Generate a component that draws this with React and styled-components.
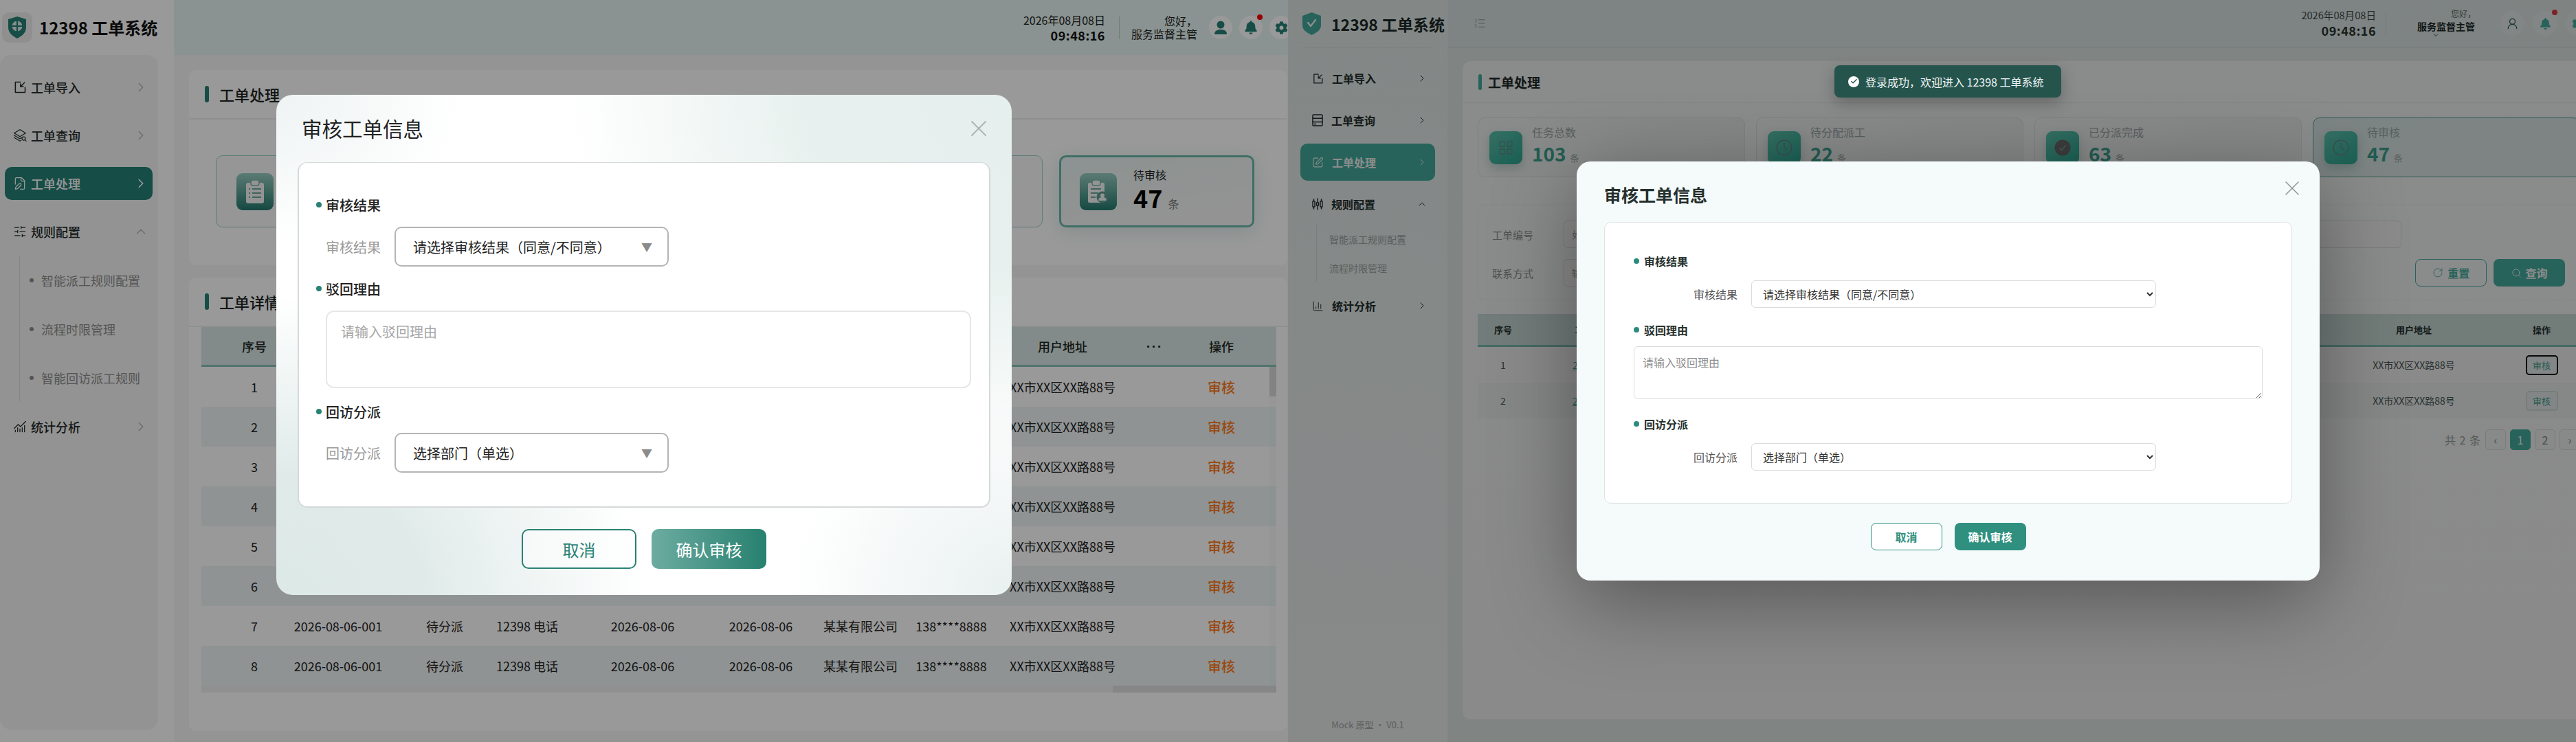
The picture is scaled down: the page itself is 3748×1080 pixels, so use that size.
import React from "react"
import styled, { createGlobalStyle } from "styled-components"
import {
  ChevronRight, ChevronUp, ChevronDown, X, FilePen, SlidersHorizontal, ChartNoAxesCombined,
  SquarePen, ChartColumn, ListCollapse, UserRound, RotateCw, Search, Clock, LayoutGrid, Check,
} from "lucide-react"
import { FaBell, FaCog } from "react-icons/fa"

const GlobalStyle = createGlobalStyle`
  html, body { margin: 0; padding: 0; background: #fff; }
  * { box-sizing: border-box; }
  body { font-family: "Noto Sans CJK SC", "Noto Sans", sans-serif; color: #1f2b29; }
`

const Screen = styled.div`
  width: 3748px;
  height: 1080px;
  display: grid;
  grid-template-columns: 1874px 1874px;
  overflow: hidden;
`

const Pane = styled.section`
  position: relative;
  height: 1080px;
  overflow: hidden;
`

const Backdrop = styled.div`
  position: absolute;
  inset: 0;
  background: rgba(0, 0, 0, ${p => p.$alpha});
`

/* ---------- left window ---------- */

const LeftApp = styled.div`
  display: flex;
  width: 1874px;
  height: 1080px;
  background: #f7f7f7;
`

const LeftSidebar = styled.aside`
  width: 253px;
  flex: none;
  display: flex;
  flex-direction: column;
  background: #fff;
`

const LeftBrand = styled.div`
  height: 80px;
  flex: none;
  display: flex;
  align-items: center;
  gap: 10px;
  padding-left: 3px;
`

const LogoTile = styled.div`
  width: 44px;
  height: 44px;
  display: flex;
  align-items: center;
  justify-content: center;
  border-radius: 10px;
  background: #eeeeee;
`

const LeftBrandName = styled.div`
  font-size: 24px;
  font-weight: 700;
  line-height: 1;
  white-space: nowrap;
  color: #111;
`

const LeftNav = styled.nav`
  width: 230px;
  height: 982px;
  display: flex;
  flex-direction: column;
  gap: 22px;
  padding: 23px 8px 0 7px;
  border-radius: 16px;
  background: #f5f5f5;
`

const LeftNavItem = styled.div`
  height: 48px;
  flex: none;
  display: flex;
  align-items: center;
  gap: 6px;
  padding: 0 6px 0 12px;
  border-radius: 10px;
  font-size: 18px;
  font-weight: 500;
  background: ${p => (p.$active ? "#268075" : "transparent")};
  color: ${p => (p.$active ? "#fff" : "#1f2b29")};
  & > span { flex: 1; }
  & > svg:last-child { color: ${p => (p.$active ? "#fff" : "#b4b4b4")}; }
`

const LeftSubList = styled.div`
  height: 212px;
  flex: none;
  display: flex;
  flex-direction: column;
  gap: 23px;
  margin: -11px 0 -9px 21px;
  padding-top: 12px;
  border-left: 1px solid #dddddd;
`

const LeftSubItem = styled.div`
  height: 48px;
  flex: none;
  display: flex;
  align-items: center;
  gap: 11px;
  padding-left: 14px;
  font-size: 18px;
  color: #8c8c8c;
  &::before {
    content: "";
    width: 6px;
    height: 6px;
    border-radius: 50%;
    background: #8c8c8c;
  }
`

const LeftMain = styled.main`
  flex: 1;
  min-width: 0;
  display: flex;
  flex-direction: column;
`

const LeftHeader = styled.header`
  height: 80px;
  flex: none;
  display: flex;
  align-items: center;
  justify-content: flex-end;
  margin-bottom: 22px;
  background: #e6f5f2;
`

const LeftClock = styled.div`
  text-align: right;
  font-size: 16px;
  line-height: 20px;
  color: #222;
  & > strong {
    display: block;
    margin-top: 2px;
    font-size: 18px;
    line-height: 20px;
    letter-spacing: 0.5px;
    font-weight: 700;
    color: #111;
  }
`

const LeftDivider = styled.div`
  width: 1px;
  height: 33px;
  margin: 0 17px 0 20px;
  background: #c0ccca;
`

const LeftUser = styled.div`
  text-align: right;
  font-size: 16px;
  line-height: 19px;
  color: #222;
`

const IconRow = styled.div`
  display: flex;
  gap: ${p => p.$gap}px;
  margin: ${p => p.$margin};
`

const RoundIcon = styled.div`
  position: relative;
  width: ${p => p.$size}px;
  height: ${p => p.$size}px;
  flex: none;
  display: flex;
  align-items: center;
  justify-content: center;
  border-radius: 50%;
  background: ${p => p.$bg};
  color: ${p => p.$color};
`

const RedDot = styled.i`
  position: absolute;
  top: -2px;
  right: 0;
  width: 8px;
  height: 8px;
  border-radius: 50%;
  background: ${p => p.$color};
`

const LeftPanel = styled.div`
  margin: 0 1px ${p => p.$gap}px 22px;
  height: ${p => p.$height}px;
  flex: none;
  border-radius: 10px;
  background: #fff;
`

const LeftPanelHead = styled.div`
  height: 72px;
  display: flex;
  align-items: center;
  gap: 15px;
  padding-left: 23px;
  border-bottom: 2px solid #eeeeee;
  font-size: 22px;
  font-weight: 500;
  color: #1c2624;
  &::before {
    content: "";
    width: 6px;
    height: 24px;
    border-radius: 3px;
    background: #268075;
  }
`

const LeftStats = styled.div`
  display: grid;
  grid-template-columns: repeat(3, 1fr) 284px;
  gap: 24px;
  padding: 52px 48px 0 39px;
`

const LeftStat = styled.div`
  height: 105px;
  display: flex;
  align-items: center;
  gap: 24px;
  padding-left: ${p => (p.$current ? 27 : 29)}px;
  border-radius: 10px;
  border: ${p => (p.$current ? "3px solid #69b8a9" : "1px solid #9fd0c6")};
  background: ${p => (p.$current ? "linear-gradient(170deg, #eaf5f3, #f8f6f6)" : "#fafafa")};
  box-shadow: ${p => (p.$current ? "0 6px 26px rgba(38, 128, 117, 0.16)" : "none")};
`

const LeftStatIcon = styled.div`
  width: 54px;
  height: 54px;
  flex: none;
  display: flex;
  align-items: center;
  justify-content: center;
  border-radius: 9px;
  background: linear-gradient(180deg, #98cdc1, #247a6f);
`

const LeftStatText = styled.div`
  padding-top: 3px;
`

const LeftStatLabel = styled.div`
  font-size: 16px;
  line-height: 22px;
  color: #222;
`

const LeftStatValue = styled.div`
  display: flex;
  align-items: baseline;
  gap: 8px;
  font-size: 36px;
  line-height: 44px;
  font-weight: 700;
  color: #000;
  & > small {
    font-size: 16px;
    font-weight: 400;
    color: #777;
  }
`

const LEFT_COLUMNS = "98px 202px 108px 132px 204px 140px 150px 114px 210px 58px 136px 12px"

const LeftTable = styled.div`
  position: relative;
  margin: 0 16px 0 18px;
`

const LeftRow = styled.div`
  display: grid;
  grid-template-columns: ${LEFT_COLUMNS};
  height: 58px;
  align-items: center;
  text-align: center;
  font-size: 18px;
  white-space: nowrap;
  color: #222;
  background: ${p => (p.$head ? "#d9e8e5" : p.$even ? "#eef6f6" : "#fff")};
  ${p => p.$head && "border-bottom: 3px solid #86c2b6; font-weight: 500; color: #1c2624;"}
  & > div:first-child { padding-left: 56px; }
`

const HeadDots = styled.div`
  font-family: "Noto Sans", sans-serif;
  letter-spacing: 3px;
  font-weight: 700;
`

const OrangeLink = styled.span`
  font-size: 20px;
  font-weight: 500;
  color: #ff7a1a;
`

const LeftScrollY = styled.div`
  position: absolute;
  top: 58px;
  right: 0;
  bottom: 10px;
  width: 10px;
  background: rgba(0, 0, 0, 0.015);
  &::before {
    content: "";
    display: block;
    height: 43px;
    background: rgba(0, 0, 0, 0.13);
  }
`

const LeftScrollX = styled.div`
  height: 10px;
  display: flex;
  justify-content: flex-end;
  background: #f1f1f1;
  &::before {
    content: "";
    width: 238px;
    background: #e0e0e0;
  }
`

const LeftModal = styled.div`
  position: absolute;
  left: 402px;
  top: 138px;
  width: 1070px;
  height: 728px;
  display: flex;
  flex-direction: column;
  padding: 0 31px;
  border-radius: 24px;
  background:
    radial-gradient(ellipse 60% 75% at 100% 0%, #e5efed 0%, #e7f0ee 45%, rgba(231, 240, 238, 0) 100%),
    radial-gradient(ellipse 50% 60% at 0% 100%, #dde9e7 0%, #e0ebe9 40%, rgba(224, 235, 233, 0) 100%),
    radial-gradient(ellipse 30% 40% at 100% 100%, #e9f0f0 0%, rgba(233, 240, 240, 0) 100%),
    radial-gradient(ellipse 25% 30% at 0% 0%, #eef3f3 0%, rgba(238, 243, 243, 0) 100%),
    #fff;
`

const LeftModalHead = styled.div`
  height: 98px;
  flex: none;
  display: flex;
  align-items: center;
  justify-content: space-between;
  padding: 0 0 0 6px;
`

const LeftModalTitle = styled.h2`
  margin: 0 0 2px;
  font-size: 29.5px;
  font-weight: 400;
  color: #222;
`

const CloseButton = styled.button`
  width: ${p => p.$size}px;
  height: ${p => p.$size}px;
  padding: 0;
  display: flex;
  align-items: center;
  justify-content: center;
  border: none;
  background: none;
  color: ${p => p.$color};
  margin: ${p => p.$margin};
`

const LeftFormCard = styled.div`
  height: 503px;
  flex: none;
  padding: 47px 27px 0 25px;
  border: 2px solid #d6d9d9;
  border-top-width: 1.5px;
  border-radius: 14px;
  background: #fff;
`

const LeftSection = styled.div`
  display: flex;
  align-items: center;
  gap: 6px;
  height: 28px;
  margin-top: ${p => p.$top}px;
  font-size: 20px;
  font-weight: 500;
  color: #222;
  &::before {
    content: "";
    width: 8px;
    height: 8px;
    border-radius: 50%;
    background: #2a8274;
  }
`

const LeftField = styled.div`
  display: flex;
  align-items: center;
  gap: 20px;
  margin: ${p => p.$top}px 0 0 14px;
  font-size: 20px;
  color: #999;
`

const LeftSelect = styled.div`
  width: 399px;
  height: 58px;
  display: flex;
  align-items: center;
  justify-content: space-between;
  padding: 0 22px 0 25px;
  border: 2px solid #b4b4b4;
  border-radius: 10px;
  background: #fff;
  font-size: 20px;
  color: #222;
  & > span:last-child { font-size: 16px; color: #8b8b8b; }
`

const LeftTextArea = styled.div`
  width: 939px;
  height: 113px;
  margin: 18px 0 0 14px;
  padding: 14px 20px;
  border: 2px solid #e7e7e7;
  border-radius: 12px;
  font-size: 20px;
  line-height: 30px;
  color: #a6a6a6;
`

const LeftFooter = styled.div`
  display: flex;
  justify-content: center;
  gap: 22px;
  margin-top: 31px;
`

const LeftButton = styled.button`
  width: 167px;
  height: 58px;
  border-radius: 10px;
  font-family: inherit;
  font-size: 24px;
  border: ${p => (p.$primary ? "none" : "2px solid #2a8274")};
  background: ${p => (p.$primary ? "linear-gradient(90deg, #6caca1, #27806f)" : "rgba(255, 255, 255, 0.45)")};
  color: ${p => (p.$primary ? "#fff" : "#2a8274")};
`

/* ---------- right window ---------- */

const RightApp = styled.div`
  position: relative;
  display: flex;
  width: 1920px;
  height: 1080px;
  background: #eaf0ef;
`

const RightSidebar = styled.aside`
  width: 233px;
  flex: none;
  display: flex;
  flex-direction: column;
  background: linear-gradient(180deg, #eef8f6 0%, #f8fafa 100%);
  border-right: 1px solid #edf2f1;
`

const RightBrand = styled.div`
  height: 70px;
  flex: none;
  display: flex;
  align-items: center;
  gap: 15px;
  margin: 0 21px;
  border-bottom: 1px solid #e2eae8;
  font-size: 23px;
  font-weight: 700;
  white-space: nowrap;
  color: #1c2b28;
  & > svg { flex: none; }
`

const RightNav = styled.nav`
  display: flex;
  flex-direction: column;
  gap: 7px;
  padding: 17px 18px 0;
`

const RightNavItem = styled.div`
  height: 54px;
  flex: none;
  display: flex;
  align-items: center;
  gap: 12px;
  padding: 0 11px 0 17px;
  border-radius: 10px;
  font-size: 16px;
  font-weight: 700;
  background: ${p => (p.$active ? "#47b5a4" : "transparent")};
  color: ${p => (p.$active ? "#fff" : "#24312e")};
  & > span { flex: 1; }
`

const RightSubList = styled.div`
  height: 83px;
  flex: none;
  margin: -4px 0 1px 23px;
  padding-left: 18px;
  border-left: 1px solid #dce6e4;
`

const RightSubItem = styled.div`
  height: 42px;
  display: flex;
  align-items: center;
  font-size: 14px;
  color: #a3aeac;
`

const VersionNote = styled.div`
  margin-top: auto;
  padding-bottom: 16px;
  text-align: center;
  font-size: 13px;
  line-height: 18px;
  color: #a3afad;
`

const RightMain = styled.main`
  flex: 1;
  min-width: 0;
  display: flex;
  flex-direction: column;
`

const RightHeader = styled.header`
  height: 70px;
  flex: none;
  display: flex;
  align-items: center;
  padding: 0 25px 0 37px;
  margin-bottom: 19px;
  border-bottom: 2px solid #dbe8e5;
  background: linear-gradient(90deg, #e3f1ee, #e7f1ef);
  color: #8ba09c;
`

const RightClock = styled.div`
  margin-left: auto;
  text-align: right;
  font-size: 14.6px;
  line-height: 20px;
  color: #404b49;
  & > strong {
    display: block;
    margin-top: 0;
    font-size: 18px;
    line-height: 24px;
    letter-spacing: 0.5px;
    font-weight: 700;
    color: #2a3533;
  }
`

const RightDivider = styled.div`
  width: 1px;
  height: 36px;
  margin: 0 45px 0 14px;
  background: #d5e0de;
`

const RightUser = styled.div`
  width: 85px;
  margin-right: 35px;
  font-size: 14px;
  font-weight: 700;
  line-height: 20px;
  color: #222d2b;
  white-space: nowrap;
  & > span {
    display: block;
    text-align: right;
    font-size: 12px;
    font-weight: 400;
    line-height: 16px;
    color: #5d6a68;
  }
  & > svg {
    display: block;
    margin: -3px 0 0 21px;
    color: #3f4c4a;
  }
`

const RightPanel = styled.div`
  margin: 0 18px 33px 21px;
  flex: 1;
  border-radius: 12px;
  background: linear-gradient(180deg, #fbfdfd, #fbfcfc);
`

const RightPanelHead = styled.div`
  height: 61px;
  display: flex;
  align-items: center;
  gap: 9px;
  padding-left: 23px;
  border-bottom: 1px solid #eef3f2;
  font-size: 19px;
  font-weight: 700;
  color: #1f2b29;
  &::before {
    content: "";
    width: 5px;
    height: 23px;
    border-radius: 3px;
    background: #47b5a4;
  }
`

const RightBody = styled.div`
  padding: 21px 22px 0;
`

const RightStats = styled.div`
  display: grid;
  grid-template-columns: repeat(4, 1fr);
  gap: 16px;
`

const RightStat = styled.div`
  height: 87px;
  display: flex;
  align-items: center;
  gap: 14px;
  padding-left: 16px;
  border-radius: 10px;
  border: 1px solid ${p => (p.$current ? "#5aa69a" : "#e4eaea")};
  background: ${p => (p.$current ? "linear-gradient(135deg, #e2f0ee, #e4f1ef)" : "linear-gradient(135deg, #fbfdfd, #f1f5f4)")};
`

const RightStatIcon = styled.div`
  width: 48px;
  height: 48px;
  flex: none;
  display: flex;
  align-items: center;
  justify-content: center;
  border-radius: 9px;
  background: linear-gradient(145deg, #62cbb6, #2faf98);
  box-shadow: 0 6px 14px rgba(40, 120, 105, 0.25);
  color: #6b8f89;
`

const RightStatLabel = styled.div`
  font-size: 16px;
  line-height: 22px;
  color: #a0aeac;
`

const RightStatValue = styled.div`
  display: flex;
  align-items: baseline;
  gap: 6px;
  margin-top: 2px;
  font-size: 28px;
  line-height: 36px;
  font-weight: 700;
  color: #3fa896;
  & > small {
    font-size: 13px;
    font-weight: 400;
    color: #a5afad;
  }
`

const RightFilter = styled.div`
  height: 139px;
  margin-top: 40px;
  display: flex;
  flex-direction: column;
  gap: 16px;
  padding: 22px 21px 0 20px;
  border: 1px solid #f1f4f3;
  border-radius: 10px;
  background: #fcfdfd;
`

const RightFilterRow = styled.div`
  display: flex;
  align-items: center;
`

const RightFilterLabel = styled.label`
  width: 104px;
  flex: none;
  font-size: 15px;
  color: #8b9795;
`

const RightFilterInput = styled.input`
  width: ${p => p.$width}px;
  height: 40px;
  padding: 0 11px;
  border: 1px solid #dfe5e4;
  border-radius: 6px;
  background: #fdfefe;
  font-family: inherit;
  font-size: 14px;
  &::placeholder { color: #99a5a3; }
`

const RightFilterButton = styled.button`
  width: 104px;
  height: 40px;
  display: flex;
  align-items: center;
  justify-content: center;
  gap: 6px;
  margin-left: ${p => p.$left}px;
  border-radius: 8px;
  font-family: inherit;
  font-size: 16px;
  font-weight: 700;
  border: ${p => (p.$primary ? "none" : "1px solid #47b5a4")};
  background: ${p => (p.$primary ? "#47b5a4" : "transparent")};
  color: ${p => (p.$primary ? "#fff" : "#47b5a4")};
`

const RightTable = styled.div`
  margin-top: 20px;
`

const RIGHT_COLUMNS = "74px 228px repeat(6, 1fr) 260px 112px"

const RightRow = styled.div`
  display: grid;
  grid-template-columns: ${RIGHT_COLUMNS};
  height: ${p => (p.$head ? 48 : 52)}px;
  align-items: center;
  text-align: center;
  white-space: nowrap;
  font-size: ${p => (p.$head ? 13 : 14)}px;
  font-weight: ${p => (p.$head ? 700 : 400)};
  color: #4d5a58;
  background: ${p => (p.$head ? "linear-gradient(90deg, #cfe2df, #cfe3df)" : p.$even ? "#f2f7f6" : "#fbfcfc")};
  ${p => p.$head && "border-bottom: 3px solid #7fc1b5; color: #26322f;"}
`

const RightTicketLink = styled.span`
  color: #3fa896;
  text-decoration: underline;
`

const RightRowButton = styled.button`
  width: 47px;
  height: 29px;
  padding: 0;
  border-radius: 5px;
  font-family: inherit;
  font-size: 13px;
  color: #47a596;
  background: #eef5f4;
  border: ${p => (p.$focused ? "2px solid #111" : "2px solid #d5e3e0")};
`

const RightPager = styled.div`
  display: flex;
  align-items: center;
  justify-content: flex-end;
  gap: 6px;
  margin-top: 16px;
  font-size: 16px;
  letter-spacing: 1px;
  color: #9aa5a3;
`

const RightPageButton = styled.button`
  width: 30px;
  height: 30px;
  padding: 0;
  border-radius: 5px;
  font-family: inherit;
  font-size: 16px;
  border: 1px solid ${p => (p.$active ? "#47b5a4" : "#dbe3e1")};
  background: ${p => (p.$active ? "#47b5a4" : "#f8fafa")};
  color: ${p => (p.$active ? "#fff" : "#7f8c8a")};
`

const Toast = styled.div`
  position: absolute;
  left: 795px;
  top: 95px;
  z-index: 3;
  width: 330px;
  height: 47px;
  display: flex;
  align-items: center;
  gap: 9px;
  padding-left: 20px;
  border-radius: 8px;
  background: #25544d;
  box-shadow: 0 8px 22px rgba(0, 0, 0, 0.25);
  font-size: 16px;
  white-space: nowrap;
  color: #f1f6f5;
`

const ToastMark = styled.span`
  width: 16px;
  height: 16px;
  flex: none;
  display: flex;
  align-items: center;
  justify-content: center;
  border-radius: 50%;
  background: #fff;
  color: #25544d;
`

const RightModal = styled.div`
  position: absolute;
  left: 420px;
  top: 235px;
  z-index: 2;
  width: 1081px;
  height: 610px;
  display: flex;
  flex-direction: column;
  padding: 0 40px;
  border-radius: 20px;
  background: #f5fafa;
  box-shadow: 0 30px 120px rgba(0, 0, 0, 0.38);
`

const RightModalHead = styled.div`
  height: 88px;
  flex: none;
  display: flex;
  align-items: center;
  justify-content: space-between;
`

const RightModalTitle = styled.h2`
  margin: 8px 0 0;
  font-size: 25px;
  font-weight: 700;
  color: #25302e;
`

const RightFormCard = styled.div`
  height: 410px;
  flex: none;
  padding: 44px 0 0 42px;
  border: 1px solid #dde3e2;
  border-radius: 10px;
  background: #fff;
`

const RightSection = styled.div`
  display: flex;
  align-items: center;
  gap: 7px;
  height: 24px;
  margin-top: ${p => p.$top}px;
  font-size: 16px;
  font-weight: 700;
  color: #27322f;
  &::before {
    content: "";
    width: 8px;
    height: 8px;
    border-radius: 50%;
    background: #2a8c7c;
  }
`

const RightField = styled.div`
  display: flex;
  align-items: center;
  margin-top: ${p => p.$top}px;
  font-size: 16px;
  color: #555;
`

const RightFieldLabel = styled.label`
  width: 151px;
  flex: none;
  text-align: right;
`

const RightSelect = styled.select`
  width: 589px;
  height: 40px;
  margin-left: 20px;
  padding: 0 12px;
  border: 1.5px solid #dcdcdc;
  border-radius: 6px;
  background-color: #fff;
  font-family: inherit;
  font-size: 16px;
  color: #333;
`

const RightTextArea = styled.textarea`
  display: block;
  width: 915px;
  height: 77px;
  margin-top: 12px;
  padding: 10px 12px;
  border: 1.5px solid #dcdcdc;
  border-radius: 6px;
  font-family: inherit;
  font-size: 16px;
  line-height: 24px;
  &::placeholder { color: #8c8c8c; }
`

const RightFooter = styled.div`
  display: flex;
  justify-content: center;
  gap: 18px;
  margin-top: 28px;
`

const RightButton = styled.button`
  width: 104px;
  height: 40px;
  border-radius: 8px;
  font-family: inherit;
  font-size: 16px;
  font-weight: 700;
  border: ${p => (p.$primary ? "none" : "1.5px solid #2f9080")};
  background: ${p => (p.$primary ? "#2f9080" : "#fff")};
  color: ${p => (p.$primary ? "#fff" : "#2f9080")};
`

/* ---------- drawings ---------- */

const stroke = { fill: "none", stroke: "currentColor", strokeWidth: 1.8, strokeLinecap: "round", strokeLinejoin: "round" }

function LeftShield() {
  return (
    <svg width="28" height="32" viewBox="0 0 28 32">
      <path d="M14 0 L27 4 V16 C27 24 20 29 14 32 C8 29 1 24 1 16 V4 Z" fill="#268075" />
      <circle cx="14" cy="14" r="7.5" fill="#dcebe8" />
      <path d="M14 6v16M6 14h16" stroke="#268075" strokeWidth="2.2" />
    </svg>
  )
}

function RightShield() {
  return (
    <svg width="27" height="33" viewBox="0 0 27 33">
      <path d="M13.5 0 L27 5 V19 C27 26 20 30 13.5 33 C7 30 0 26 0 19 V5 Z" fill="#47b5a4" />
      <path d="M8 15l4 5 7-9" fill="none" stroke="#fff" strokeWidth="2.4" strokeLinecap="round" strokeLinejoin="round" />
    </svg>
  )
}

function ImportIcon({ size = 20 }) {
  return (
    <svg width={size} height={size} viewBox="0 0 24 24" {...stroke}>
      <path d="M13 3H4v18h17v-9" />
      <path d="M20 4l-7 7M13 6v5h5" />
    </svg>
  )
}

function LayerSearchIcon() {
  return (
    <svg width="20" height="20" viewBox="0 0 24 24" {...stroke} strokeWidth="1.4">
      <path d="M12 2L2 8l10 6 10-6z" />
      <path d="M2 12l10 6 3-2M2 16l10 6 2-1" />
      <circle cx="18.5" cy="17.5" r="3" />
      <path d="M21 20l2 2" />
    </svg>
  )
}

function TableIcon() {
  return (
    <svg width="16" height="18" viewBox="0 0 16 18" {...stroke} strokeWidth="1.5">
      <rect x="1" y="1" width="14" height="16" rx="1" />
      <path d="M1 6.3h14M1 11.6h14M3.5 14.5h2" />
    </svg>
  )
}

function CandleIcon() {
  return (
    <svg width="16" height="18" viewBox="0 0 16 18" {...stroke} strokeWidth="1.4">
      <path d="M2.5 2v14M8 1v16M13.5 2v14" />
      <rect x="1" y="5" width="3" height="8" fill="#f2f7f6" />
      <rect x="6.5" y="7" width="3" height="4" fill="#f2f7f6" />
      <rect x="12" y="5" width="3" height="8" fill="#f2f7f6" />
    </svg>
  )
}

function PersonFilled() {
  return (
    <svg width="18" height="20" viewBox="0 0 18 20" fill="currentColor">
      <circle cx="9" cy="6" r="5.5" />
      <path d="M0 20c0-5 4-7 9-7s9 2 9 7z" />
    </svg>
  )
}

function ClipboardList() {
  return (
    <svg width="26" height="34" viewBox="0 0 26 34">
      <rect x="0" y="4" width="26" height="30" rx="3" fill="#f4f7f6" />
      <rect x="7" y="0" width="12" height="8" rx="3" fill="#f4f7f6" stroke="#7fb2a7" strokeWidth="1.5" />
      <path d="M4 13h2M9 13h13M4 19h2M9 19h13M4 25h2M9 25h13" stroke="#6ea69b" strokeWidth="2.2" />
    </svg>
  )
}

function ClipboardStamp() {
  return (
    <svg width="30" height="34" viewBox="0 0 30 34">
      <rect x="0" y="4" width="24" height="29" rx="2" fill="#f4f7f6" />
      <rect x="6" y="0" width="12" height="8" rx="3" fill="#f4f7f6" stroke="#7fb2a7" strokeWidth="1.5" />
      <path d="M4 13h15M4 19h11M4 25h7" stroke="#6ea69b" strokeWidth="2.2" />
      <circle cx="21" cy="25" r="8.5" fill="#5d9c90" />
      <circle cx="21" cy="22.5" r="3" fill="#f4f7f6" />
      <path d="M15.5 30h11v-2c0-2-3-3-5.5-3s-5.5 1-5.5 3z" fill="#f4f7f6" />
    </svg>
  )
}

function DoneBadge() {
  return (
    <svg width="24" height="24" viewBox="0 0 24 24">
      <circle cx="12" cy="12" r="11.5" fill="#6d6d6d" />
      <path d="M7.5 12.5l3 3 6-7" fill="none" stroke="#7aa39c" strokeWidth="1.6" />
    </svg>
  )
}

const rows = [1, 2, 3, 4, 5, 6, 7, 8]

// rows 1-6 run behind the dialog, so only the columns outside it are filled
const LeftCells = ({ index, behindDialog }) => (
  <>
    <div>{index}</div>
    <div>{!behindDialog && "2026-08-06-001"}</div>
    <div>{!behindDialog && "待分派"}</div>
    <div>{!behindDialog && "12398 电话"}</div>
    <div>{!behindDialog && "2026-08-06"}</div>
    <div>{!behindDialog && "2026-08-06"}</div>
    <div>{!behindDialog && "某某有限公司"}</div>
    <div>{!behindDialog && "138****8888"}</div>
    <div>XX市XX区XX路88号</div>
    <div />
    <div><OrangeLink>审核</OrangeLink></div>
  </>
)

function LeftWindow() {
  return (
    <Pane>
      <LeftApp>
        <LeftSidebar>
          <LeftBrand>
            <LogoTile><LeftShield /></LogoTile>
            <LeftBrandName>12398 工单系统</LeftBrandName>
          </LeftBrand>
          <LeftNav>
            <LeftNavItem><ImportIcon /><span>工单导入</span><ChevronRight size={22} strokeWidth={1.5} /></LeftNavItem>
            <LeftNavItem><LayerSearchIcon /><span>工单查询</span><ChevronRight size={22} strokeWidth={1.5} /></LeftNavItem>
            <LeftNavItem $active><FilePen size={20} strokeWidth={1.5} /><span>工单处理</span><ChevronRight size={22} strokeWidth={1.8} /></LeftNavItem>
            <LeftNavItem><SlidersHorizontal size={20} strokeWidth={1.5} /><span>规则配置</span><ChevronUp size={22} strokeWidth={1.5} /></LeftNavItem>
            <LeftSubList>
              <LeftSubItem>智能派工规则配置</LeftSubItem>
              <LeftSubItem>流程时限管理</LeftSubItem>
              <LeftSubItem>智能回访派工规则</LeftSubItem>
            </LeftSubList>
            <LeftNavItem><ChartNoAxesCombined size={20} strokeWidth={1.5} /><span>统计分析</span><ChevronRight size={22} strokeWidth={1.5} /></LeftNavItem>
          </LeftNav>
        </LeftSidebar>
        <LeftMain>
          <LeftHeader>
            <LeftClock>2026年08月08日<strong>09:48:16</strong></LeftClock>
            <LeftDivider />
            <LeftUser>您好，<br />服务监督主管</LeftUser>
            <IconRow $gap={10} $margin="0 -7px 0 17px">
              <RoundIcon $size={34} $bg="#fff" $color="#268075"><PersonFilled /></RoundIcon>
              <RoundIcon $size={34} $bg="#fff" $color="#268075"><FaBell size={20} /><RedDot $color="#ff0000" /></RoundIcon>
              <RoundIcon $size={34} $bg="#fff" $color="#268075"><FaCog size={19} /></RoundIcon>
            </IconRow>
          </LeftHeader>
          <LeftPanel $height={284} $gap={18}>
            <LeftPanelHead>工单处理</LeftPanelHead>
            <LeftStats>
              <LeftStat><LeftStatIcon><ClipboardList /></LeftStatIcon></LeftStat>
              <LeftStat />
              <LeftStat />
              <LeftStat $current>
                <LeftStatIcon><ClipboardStamp /></LeftStatIcon>
                <LeftStatText><LeftStatLabel>待审核</LeftStatLabel><LeftStatValue>47<small>条</small></LeftStatValue></LeftStatText>
              </LeftStat>
            </LeftStats>
          </LeftPanel>
          <LeftPanel $height={660} $gap={0}>
            <LeftPanelHead>工单详情</LeftPanelHead>
            <LeftTable>
              <LeftRow $head>
                <div>序号</div><div /><div /><div /><div /><div /><div /><div />
                <div>用户地址</div><HeadDots>···</HeadDots><div>操作</div>
              </LeftRow>
              {rows.map(n => (
                <LeftRow key={n} $even={n % 2 === 0}><LeftCells index={n} behindDialog={n < 7} /></LeftRow>
              ))}
              <LeftScrollX />
              <LeftScrollY />
            </LeftTable>
          </LeftPanel>
        </LeftMain>
      </LeftApp>
      <Backdrop $alpha={0.4} />
      <LeftModal>
        <LeftModalHead>
          <LeftModalTitle>审核工单信息</LeftModalTitle>
          <CloseButton $size={40} $color="#a9b4b2" $margin="0 -3px 0 0"><X size={40} strokeWidth={1.1} /></CloseButton>
        </LeftModalHead>
        <LeftFormCard>
          <LeftSection $top={0}>审核结果</LeftSection>
          <LeftField $top={18}>
            审核结果
            <LeftSelect><span>请选择审核结果（同意/不同意）</span><span>▼</span></LeftSelect>
          </LeftField>
          <LeftSection $top={18}>驳回理由</LeftSection>
          <LeftTextArea>请输入驳回理由</LeftTextArea>
          <LeftSection $top={20}>回访分派</LeftSection>
          <LeftField $top={17}>
            回访分派
            <LeftSelect><span>选择部门（单选）</span><span>▼</span></LeftSelect>
          </LeftField>
        </LeftFormCard>
        <LeftFooter>
          <LeftButton>取消</LeftButton>
          <LeftButton $primary>确认审核</LeftButton>
        </LeftFooter>
      </LeftModal>
    </Pane>
  )
}

const RightStatCard = ({ icon, label, value, current }) => (
  <RightStat $current={current}>
    <RightStatIcon>{icon}</RightStatIcon>
    <div>
      <RightStatLabel>{label}</RightStatLabel>
      <RightStatValue>{value}<small>条</small></RightStatValue>
    </div>
  </RightStat>
)

// the middle columns sit behind the dialog
const RightCells = ({ index, focused }) => (
  <>
    <div>{index}</div>
    <div><RightTicketLink>2026-08-06-001</RightTicketLink></div>
    <div /><div /><div /><div /><div /><div />
    <div>XX市XX区XX路88号</div>
    <div><RightRowButton $focused={focused}>审核</RightRowButton></div>
  </>
)

function RightWindow() {
  return (
    <Pane>
      <RightApp>
        <RightSidebar>
          <RightBrand><RightShield />12398 工单系统</RightBrand>
          <RightNav>
            <RightNavItem><ImportIcon size={17} /><span>工单导入</span><ChevronRight size={16} strokeWidth={1.5} /></RightNavItem>
            <RightNavItem><TableIcon /><span>工单查询</span><ChevronRight size={16} strokeWidth={1.5} /></RightNavItem>
            <RightNavItem $active><SquarePen size={17} strokeWidth={1.5} /><span>工单处理</span><ChevronRight size={16} strokeWidth={1.5} /></RightNavItem>
            <RightNavItem><CandleIcon /><span>规则配置</span><ChevronUp size={16} strokeWidth={1.5} /></RightNavItem>
            <RightSubList>
              <RightSubItem>智能派工规则配置</RightSubItem>
              <RightSubItem>流程时限管理</RightSubItem>
            </RightSubList>
            <RightNavItem><ChartColumn size={17} strokeWidth={1.4} /><span>统计分析</span><ChevronRight size={16} strokeWidth={1.5} /></RightNavItem>
          </RightNav>
          <VersionNote>Mock 原型 · V0.1</VersionNote>
        </RightSidebar>
        <RightMain>
          <RightHeader>
            <ListCollapse size={18} strokeWidth={1.3} />
            <RightClock>2026年08月08日<strong>09:48:16</strong></RightClock>
            <RightDivider />
            <RightUser><span>您好，</span>服务监督主管<ChevronDown size={12} /></RightUser>
            <IconRow $gap={12} $margin="0">
              <RoundIcon $size={36} $bg="#eef5f4" $color="#2f5d56"><UserRound size={19} strokeWidth={1.6} /></RoundIcon>
              <RoundIcon $size={36} $bg="#eef5f4" $color="#47b5a4"><FaBell size={17} /><RedDot $color="#e83a45" /></RoundIcon>
              <RoundIcon $size={36} $bg="#eef5f4" $color="#47b5a4"><FaCog size={19} /></RoundIcon>
            </IconRow>
          </RightHeader>
          <RightPanel>
            <RightPanelHead>工单处理</RightPanelHead>
            <RightBody>
              <RightStats>
                <RightStatCard icon={<LayoutGrid size={24} strokeWidth={1.3} />} label="任务总数" value="103" />
                <RightStatCard icon={<Clock size={26} strokeWidth={1.3} />} label="待分配派工" value="22" />
                <RightStatCard icon={<DoneBadge />} label="已分派完成" value="63" />
                <RightStatCard icon={<Clock size={26} strokeWidth={1.3} />} label="待审核" value="47" current />
              </RightStats>
              <RightFilter>
                <RightFilterRow>
                  <RightFilterLabel>工单编号</RightFilterLabel>
                  <RightFilterInput $width={1219} placeholder="如：2026-08-06-001" />
                </RightFilterRow>
                <RightFilterRow>
                  <RightFilterLabel>联系方式</RightFilterLabel>
                  <RightFilterInput $width={1000} placeholder="输入手机号码" />
                  <RightFilterButton $left={242}><RotateCw size={16} strokeWidth={1.4} />重置</RightFilterButton>
                  <RightFilterButton $primary $left={10}><Search size={15} strokeWidth={1.5} />查询</RightFilterButton>
                </RightFilterRow>
              </RightFilter>
              <RightTable>
                <RightRow $head>
                  <div>序号</div><div>12398 工单编号</div><div /><div /><div /><div /><div /><div />
                  <div>用户地址</div><div>操作</div>
                </RightRow>
                <RightRow><RightCells index={1} focused /></RightRow>
                <RightRow $even><RightCells index={2} /></RightRow>
              </RightTable>
              <RightPager>
                <span>共 2 条</span>
                <RightPageButton>‹</RightPageButton>
                <RightPageButton $active>1</RightPageButton>
                <RightPageButton>2</RightPageButton>
                <RightPageButton>›</RightPageButton>
              </RightPager>
            </RightBody>
          </RightPanel>
        </RightMain>
        <Backdrop $alpha={0.45} />
        <Toast>
          <ToastMark><Check size={11} strokeWidth={3} /></ToastMark>
          登录成功，欢迎进入 12398 工单系统
        </Toast>
        <RightModal>
          <RightModalHead>
            <RightModalTitle>审核工单信息</RightModalTitle>
            <CloseButton $size={36} $color="#8b9593" $margin="0 -18px 10px 0"><X size={36} strokeWidth={1} /></CloseButton>
          </RightModalHead>
          <RightFormCard>
            <RightSection $top={0}>审核结果</RightSection>
            <RightField $top={16}>
              <RightFieldLabel>审核结果</RightFieldLabel>
              <RightSelect defaultValue=""><option value="">请选择审核结果（同意/不同意）</option></RightSelect>
            </RightField>
            <RightSection $top={20}>驳回理由</RightSection>
            <RightTextArea placeholder="请输入驳回理由" />
            <RightSection $top={24}>回访分派</RightSection>
            <RightField $top={16}>
              <RightFieldLabel>回访分派</RightFieldLabel>
              <RightSelect defaultValue=""><option value="">选择部门（单选）</option></RightSelect>
            </RightField>
          </RightFormCard>
          <RightFooter>
            <RightButton>取消</RightButton>
            <RightButton $primary>确认审核</RightButton>
          </RightFooter>
        </RightModal>
      </RightApp>
    </Pane>
  )
}

export default function App() {
  return (
    <>
      <GlobalStyle />
      <Screen>
        <LeftWindow />
        <RightWindow />
      </Screen>
    </>
  )
}
